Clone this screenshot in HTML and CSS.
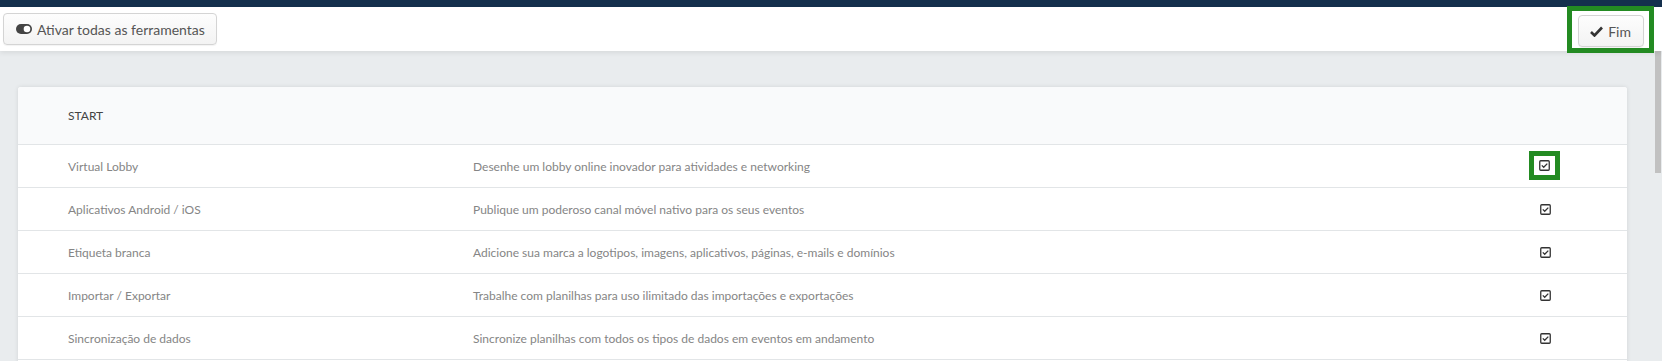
FILE: index.html
```html
<!DOCTYPE html>
<html lang="pt">

<head>
    <meta charset="UTF-8">
    <meta name="viewport" content="width=device-width, initial-scale=1.0">
    <title>Ferramentas</title>
    <link rel="stylesheet" href="styles.css">
</head>

<body>
    <div class="topline"></div>

    <header class="toolbar">
        <button class="btn" type="button">
            <svg class="icon-toggle" width="16" height="10" viewBox="0 0 16 10">
                <rect x="0" y="0" width="16" height="10" rx="5" fill="#444"/>
                <circle cx="11" cy="5" r="3.3" fill="#fff"/>
            </svg>
            Ativar todas as ferramentas
        </button>

        <div class="mark mark-btn">
            <button class="btn" type="button">
                <svg class="icon-check" width="13" height="11" viewBox="0 0 13 11">
                    <path d="M1 6 L4.5 9.5 L12 1.5" fill="none" stroke="#333" stroke-width="2.6"/>
                </svg>
                Fim
            </button>
        </div>
    </header>

    <main class="content">
        <div class="card">
            <div class="row head">
                <div class="cell name">START</div>
                <div class="cell desc"></div>
                <div class="cell tick"></div>
            </div>

            <div class="row">
                <div class="cell name">Virtual Lobby</div>
                <div class="cell desc">Desenhe um lobby online inovador para atividades e networking</div>
                <div class="cell tick">
                    <span class="mark mark-box">
                        <svg class="checkbox" width="11" height="11" viewBox="0 0 11 11"><rect x="0.75" y="0.75" width="9.5" height="9.5" rx="1" fill="none" stroke="#333" stroke-width="1.3"/><path d="M2.8 5.4 L4.7 7.3 L8.3 3.6" fill="none" stroke="#333" stroke-width="1.3"/></svg>
                    </span>
                </div>
            </div>

            <div class="row">
                <div class="cell name">Aplicativos Android / iOS</div>
                <div class="cell desc">Publique um poderoso canal móvel nativo para os seus eventos</div>
                <div class="cell tick"><svg class="checkbox" width="11" height="11" viewBox="0 0 11 11"><rect x="0.75" y="0.75" width="9.5" height="9.5" rx="1" fill="none" stroke="#333" stroke-width="1.3"/><path d="M2.8 5.4 L4.7 7.3 L8.3 3.6" fill="none" stroke="#333" stroke-width="1.3"/></svg></div>
            </div>

            <div class="row">
                <div class="cell name">Etiqueta branca</div>
                <div class="cell desc">Adicione sua marca a logotipos, imagens, aplicativos, páginas, e-mails e domínios</div>
                <div class="cell tick"><svg class="checkbox" width="11" height="11" viewBox="0 0 11 11"><rect x="0.75" y="0.75" width="9.5" height="9.5" rx="1" fill="none" stroke="#333" stroke-width="1.3"/><path d="M2.8 5.4 L4.7 7.3 L8.3 3.6" fill="none" stroke="#333" stroke-width="1.3"/></svg></div>
            </div>

            <div class="row">
                <div class="cell name">Importar / Exportar</div>
                <div class="cell desc">Trabalhe com planilhas para uso ilimitado das importações e exportações</div>
                <div class="cell tick"><svg class="checkbox" width="11" height="11" viewBox="0 0 11 11"><rect x="0.75" y="0.75" width="9.5" height="9.5" rx="1" fill="none" stroke="#333" stroke-width="1.3"/><path d="M2.8 5.4 L4.7 7.3 L8.3 3.6" fill="none" stroke="#333" stroke-width="1.3"/></svg></div>
            </div>

            <div class="row">
                <div class="cell name">Sincronização de dados</div>
                <div class="cell desc">Sincronize planilhas com todos os tipos de dados em eventos em andamento</div>
                <div class="cell tick"><svg class="checkbox" width="11" height="11" viewBox="0 0 11 11"><rect x="0.75" y="0.75" width="9.5" height="9.5" rx="1" fill="none" stroke="#333" stroke-width="1.3"/><path d="M2.8 5.4 L4.7 7.3 L8.3 3.6" fill="none" stroke="#333" stroke-width="1.3"/></svg></div>
            </div>

            <div class="row spacer"></div>
        </div>
    </main>

    <div class="scroll-thumb"></div>
</body>

</html>
```

FILE: styles.css
```css
html,
body {
    height: 100%;
}

body {
    margin: 0;
    font-family: Lato, "Open Sans", Arial, sans-serif;
    background-color: #e9ecee;
    display: flex;
    flex-direction: column;
    overflow: hidden;
}

.topline {
    height: 7px;
    background-color: #14304d;
    flex: none;
}

.toolbar {
    height: 44px;
    flex: none;
    background: white;
    display: flex;
    align-items: center;
    justify-content: space-between;
    padding: 0 8px 0 3px;
    box-shadow: 0 2px 5px rgba(0, 0, 0, 0.08);
    position: relative;
    z-index: 1;
}

.btn {
    height: 32px;
    display: flex;
    align-items: center;
    gap: 5px;
    padding: 0 11px 0 12px;
    font-family: inherit;
    font-size: 14px;
    color: #555;
    background: linear-gradient(#fdfdfd, #f3f3f3);
    border: 1px solid #d4d4d4;
    border-radius: 4px;
    box-shadow: 0 1px 1px rgba(0, 0, 0, 0.05);
    cursor: pointer;
}

/* green highlight outlines */
.mark {
    border: 5px solid #238b22;
}

.mark-btn {
    padding: 4px 5px 1px 6px;
    margin-top: 1px;
}

.mark-btn .btn {
    padding: 0 12px 0 11px;
}

.mark-box {
    display: inline-flex;
    padding: 4px 5px 4px 5px;
    margin: -1px 0 0 -2px;
}

.content {
    flex: 1;
    overflow: hidden;
    padding: 36px 35px 0 18px;
}

.card {
    background: white;
    border-radius: 3px;
    box-shadow: 0 0 4px rgba(0, 0, 0, 0.1);
}

.row {
    display: grid;
    grid-template-columns: 455px 1fr 164px;
    height: 42px;
    align-items: center;
    border-top: 1px solid #e2e5e7;
    font-size: 12px;
    color: #858585;
}

.row.head {
    height: 57px;
    border-top: none;
    background-color: #f9fafb;
    color: #444;
    border-radius: 3px 3px 0 0;
}

.cell.name {
    padding-left: 50px;
}

.cell.tick {
    display: flex;
    justify-content: center;
}

.checkbox {
    display: block;
}

.scroll-thumb {
    position: absolute;
    top: 51px;
    right: 1px;
    width: 6px;
    height: 122px;
    background: #c1c1c1;
}
```
